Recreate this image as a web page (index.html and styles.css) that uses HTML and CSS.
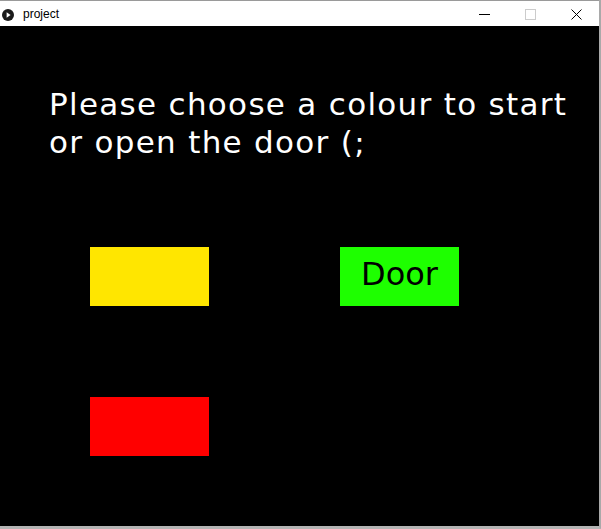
FILE: index.html
```html
<!DOCTYPE html>
<html>
<head>
<meta charset="utf-8">
<link rel="stylesheet" href="styles.css">
</head>
<body>
<div class="window">
  <div class="titlebar">
    <svg class="app-icon" width="12" height="12" viewBox="0 0 12 12">
      <circle cx="6" cy="6" r="6" fill="#1a1a1a"/>
      <path d="M4.6 3.3 L8.6 6 L4.6 8.7 Z" fill="#fff"/>
    </svg>
    <span class="title">project</span>
    <div class="controls">
      <div class="btn">
        <svg width="11" height="11" viewBox="0 0 11 11"><path d="M0 5.5 H11" stroke="#000" stroke-width="1"/></svg>
      </div>
      <div class="btn">
        <svg width="11" height="11" viewBox="0 0 11 11"><rect x="0.5" y="0.5" width="10" height="10" fill="none" stroke="#cccccc" stroke-width="1"/></svg>
      </div>
      <div class="btn">
        <svg width="11" height="11" viewBox="0 0 11 11"><path d="M0.5 0.5 L10.5 10.5 M10.5 0.5 L0.5 10.5" stroke="#000" stroke-width="1"/></svg>
      </div>
    </div>
  </div>
  <div class="canvas">
    <h1 class="heading">Please choose a colour to start<br>or open the door (;</h1>
    <div class="grid">
      <div class="box yellow"></div>
      <div class="box green"><span class="door">Door</span></div>
      <div class="box red"></div>
    </div>
  </div>
</div>
</body>
</html>
```
FILE: styles.css
```css
html, body {
  margin: 0;
  padding: 0;
  background: #fff;
}
.window {
  width: 601px;
  height: 529px;
  box-sizing: border-box;
  border-right: 2px solid #a9a9a9;
  border-bottom: 3px solid #b4b4b4;
  background: #fff;
  display: flex;
  flex-direction: column;
}
.titlebar {
  height: 25px;
  border-top: 1px solid #9a9a9a;
  background: #fff;
  display: flex;
  align-items: center;
  font-family: "Liberation Sans", Arial, sans-serif;
  font-size: 12px;
  color: #000;
}
.app-icon {
  margin-left: 2px;
  margin-top: 3px;
}
.title {
  margin-left: 9px;
  margin-top: 1px;
}
.controls {
  margin-left: auto;
  display: flex;
  height: 25px;
}
.btn {
  width: 46px;
  height: 25px;
  display: flex;
  align-items: center;
  justify-content: center;
}
.btn svg {
  margin-top: 1px;
}
.canvas {
  width: 599px;
  height: 500px;
  background: #000;
  padding-top: 59px;
  box-sizing: border-box;
}
.heading {
  margin: 0;
  padding-left: 49px;
  font-family: "DejaVu Sans", sans-serif;
  font-weight: normal;
  font-size: 31px;
  line-height: 38px;
  letter-spacing: 1.3px;
  color: #fff;
}
.grid {
  margin-top: 86px;
  margin-left: 90px;
  display: grid;
  grid-template-columns: 119px 119px;
  grid-template-rows: 59px 59px;
  column-gap: 131px;
  row-gap: 91px;
}
.box {
  width: 119px;
  height: 59px;
}
.yellow { background: #ffe600; }
.green {
  background: #1eff00;
  display: flex;
  justify-content: center;
  align-items: flex-start;
}
.red {
  background: #ff0000;
  grid-column: 1;
}
.door {
  font-family: "DejaVu Sans", sans-serif;
  font-size: 32px;
  line-height: 54px;
  color: #000;
}
```
